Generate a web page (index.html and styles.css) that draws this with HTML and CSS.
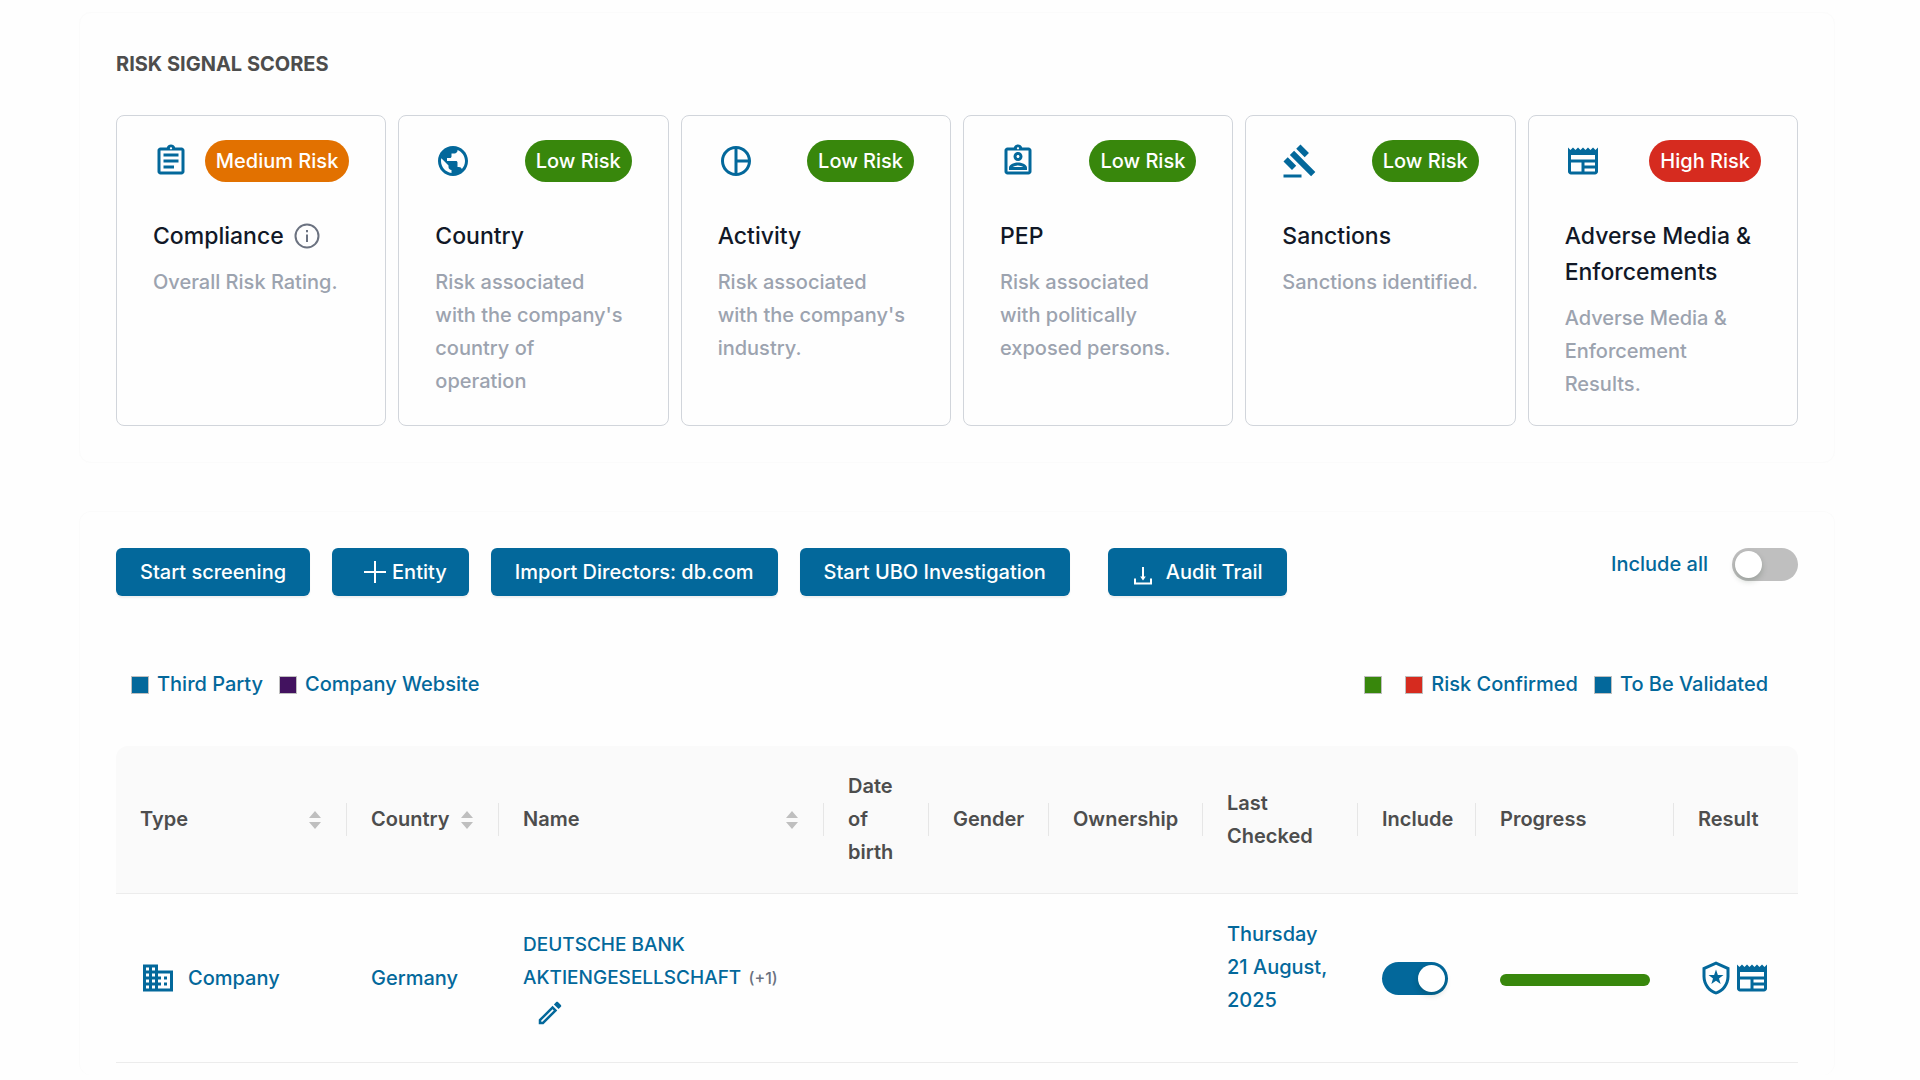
FILE: index.html
```html
<!DOCTYPE html>
<html lang="en">
<head>
    <meta charset="UTF-8">
    <title>Risk Signal Scores</title>
    <link rel="stylesheet" href="styles.css">
</head>
<body>
    <svg class="sprite">
        <symbol id="assignment" viewBox="0 0 24 24"><path d="M7 15h7v2H7zm0-4h10v2H7zm0-4h10v2H7zm12-4h-4.18C14.4 1.84 13.3 1 12 1c-1.3 0-2.4.84-2.82 2H5c-1.1 0-2 .9-2 2v14c0 1.1.9 2 2 2h14c1.1 0 2-.9 2-2V5c0-1.1-.9-2-2-2zm-7-.25c.41 0 .75.34.75.75s-.34.75-.75.75-.75-.34-.75-.75.34-.75.75-.75zM19 19H5V5h14v14z"/></symbol>
        <symbol id="public" viewBox="0 0 24 24"><path d="M12 2C6.48 2 2 6.48 2 12s4.48 10 10 10 10-4.48 10-10S17.52 2 12 2zm-1 17.93c-3.95-.49-7-3.85-7-7.93 0-.62.08-1.21.21-1.79L9 15v1c0 1.1.9 2 2 2v1.93zm6.9-2.54c-.26-.81-1-1.39-1.9-1.39h-1v-3c0-.55-.45-1-1-1H8v-2h2c.55 0 1-.45 1-1V7h2c1.1 0 2-.9 2-2v-.41c2.93 1.19 5 4.06 5 7.41 0 2.08-.8 3.97-2.1 5.39z"/></symbol>
        <symbol id="pie" viewBox="0 0 24 24"><path d="M12 2C6.48 2 2 6.48 2 12s4.48 10 10 10 10-4.48 10-10S17.52 2 12 2zm1 2.07c3.61.45 6.48 3.33 6.93 6.93H13V4.07zM4 12c0-4.06 3.07-7.44 7-7.93v15.87c-3.93-.5-7-3.88-7-7.94zm9 7.93V13h6.93c-.45 3.61-3.32 6.48-6.93 6.93z"/></symbol>
        <symbol id="assignment-ind" viewBox="0 0 24 24"><path d="M19 3h-4.18C14.4 1.84 13.3 1 12 1c-1.3 0-2.4.84-2.82 2H5c-1.1 0-2 .9-2 2v14c0 1.1.9 2 2 2h14c1.1 0 2-.9 2-2V5c0-1.1-.9-2-2-2zm-7-.25c.41 0 .75.34.75.75s-.34.75-.75.75-.75-.34-.75-.75.34-.75.75-.75zM19 19H5V5h14v14zM12 12c1.65 0 3-1.35 3-3s-1.35-3-3-3-3 1.35-3 3 1.35 3 3 3zm0-4c.55 0 1 .45 1 1s-.45 1-1 1-1-.45-1-1 .45-1 1-1zm6 8.58c0-2.5-3.97-3.58-6-3.58s-6 1.08-6 3.58V18h12v-1.42zM8.48 16c.74-.51 2.23-1 3.52-1 1.3 0 2.78.49 3.52 1H8.48z"/></symbol>
        <symbol id="gavel" viewBox="0 0 24 24"><path d="M1 21h12v2H1zM5.245 8.07l2.83-2.827 14.14 14.142-2.828 2.828zM12.317 1l5.657 5.656-2.83 2.83-5.654-5.66zM3.825 9.485l5.657 5.657-2.828 2.828-5.657-5.657z"/></symbol>
        <symbol id="newspaper" viewBox="0 0 24 24"><path d="M22 3l-1.67 1.67L18.67 3 17 4.67 15.33 3l-1.66 1.67L12 3l-1.67 1.67L8.67 3 7 4.67 5.33 3 3.67 4.67 2 3v16c0 1.1.9 2 2 2h16c1.1 0 2-.9 2-2V3zM11 19H4v-6h7v6zm9 0h-7v-2h7v2zm0-4h-7v-2h7v2zm0-4H4V8h16v3z"/></symbol>
        <symbol id="business" viewBox="0 0 24 24"><path d="M12 7V3H2v18h20V7H12zM6 19H4v-2h2v2zm0-4H4v-2h2v2zm0-4H4V9h2v2zm0-4H4V5h2v2zm4 12H8v-2h2v2zm0-4H8v-2h2v2zm0-4H8V9h2v2zm0-4H8V5h2v2zm10 12h-8v-2h2v-2h-2v-2h2v-2h-2V9h8v10zm-2-8h-2v2h2v-2zm0 4h-2v2h2v-2z"/></symbol>
        <symbol id="edit" viewBox="0 0 24 24"><path d="M14.06 9.02l.92.92L5.92 19H5v-.92l9.06-9.06M17.66 3c-.25 0-.51.1-.7.29l-1.83 1.83 3.75 3.75 1.83-1.83c.39-.39.39-1.02 0-1.41l-2.34-2.34c-.2-.2-.45-.29-.71-.29zm-3.6 3.19L3 17.25V21h3.75L17.81 9.94l-3.75-3.75z"/></symbol>
        <symbol id="police" viewBox="0 0 24 24"><path d="M12 1L3 5v6c0 5.55 3.84 10.74 9 12 5.16-1.26 9-6.45 9-12V5l-9-4zm7 10c0 4.52-2.98 8.69-7 9.93-4.02-1.24-7-5.41-7-9.93V6.3l7-3.11 7 3.11V11zM12 6.4l1.24 3.6H17l-3 2.3 1.1 3.7-3.1-2.2L8.900 16l1.1-3.7L7 10h3.76z"/></symbol>
    </svg>

    <section class="panel">
        <h2 class="section-title">RISK SIGNAL SCORES</h2>
        <div class="cards">
            <div class="card">
                <div class="card-head"><svg class="icon"><use href="#assignment"/></svg><span class="badge medium">Medium Risk</span></div>
                <h3 class="card-title">Compliance
                    <svg class="info" viewBox="0 0 30 30"><circle cx="15" cy="15" r="11.5"/><path d="M15 13.5V21M15 9v2.2"/></svg>
                </h3>
                <p class="card-text">Overall Risk Rating.</p>
            </div>
            <div class="card">
                <div class="card-head"><svg class="icon"><use href="#public"/></svg><span class="badge low">Low Risk</span></div>
                <h3 class="card-title">Country</h3>
                <p class="card-text">Risk associated<br>with the company's<br>country of<br>operation</p>
            </div>
            <div class="card">
                <div class="card-head"><svg class="icon"><use href="#pie"/></svg><span class="badge low">Low Risk</span></div>
                <h3 class="card-title">Activity</h3>
                <p class="card-text">Risk associated<br>with the company's<br>industry.</p>
            </div>
            <div class="card">
                <div class="card-head"><svg class="icon"><use href="#assignment-ind"/></svg><span class="badge low">Low Risk</span></div>
                <h3 class="card-title">PEP</h3>
                <p class="card-text">Risk associated<br>with politically<br>exposed persons.</p>
            </div>
            <div class="card">
                <div class="card-head"><svg class="icon"><use href="#gavel"/></svg><span class="badge low">Low Risk</span></div>
                <h3 class="card-title">Sanctions</h3>
                <p class="card-text">Sanctions identified.</p>
            </div>
            <div class="card">
                <div class="card-head"><svg class="icon"><use href="#newspaper"/></svg><span class="badge high">High Risk</span></div>
                <h3 class="card-title">Adverse Media &amp; Enforcements</h3>
                <p class="card-text">Adverse Media &amp; Enforcement Results.</p>
            </div>
        </div>
    </section>

    <section class="panel entities-panel">
        <div class="toolbar">
            <div class="buttons">
                <button class="button">Start screening</button>
                <button class="button with-icon"><svg class="plus" viewBox="0 0 22 22"><path d="M11 0v22M0 11h22"/></svg>Entity</button>
                <button class="button">Import Directors: db.com</button>
                <button class="button">Start UBO Investigation</button>
                <button class="button audit"><svg class="download" viewBox="0 0 18 18"><path d="M1 11.5v5h16v-5M9 0v12"/><path class="tip" d="M6.2 9.5h5.6L9 13.5z"/></svg>Audit Trail</button>
            </div>
            <label class="include-all">Include all <input type="checkbox" class="switch"></label>
        </div>

        <div class="legend">
            <div class="legend-group">
                <span class="legend-item"><i class="swatch blue"></i>Third Party</span>
                <span class="legend-item"><i class="swatch purple"></i>Company Website</span>
            </div>
            <div class="legend-group">
                <span class="legend-item unlabelled"><i class="swatch green"></i></span>
                <span class="legend-item"><i class="swatch red"></i>Risk Confirmed</span>
                <span class="legend-item"><i class="swatch blue"></i>To Be Validated</span>
            </div>
        </div>

        <table class="entities">
            <colgroup>
                <col class="col-type"><col class="col-country"><col class="col-name"><col class="col-birth"><col class="col-gender">
                <col class="col-ownership"><col class="col-checked"><col class="col-include"><col class="col-progress"><col class="col-result">
            </colgroup>
            <thead>
                <tr>
                    <th><div class="sortable">Type <svg class="sorter" viewBox="0 0 12 20"><path d="M0 8l6-7 6 7zM0 12h12l-6 7z"/></svg></div></th>
                    <th><div class="sortable">Country <svg class="sorter" viewBox="0 0 12 20"><path d="M0 8l6-7 6 7zM0 12h12l-6 7z"/></svg></div></th>
                    <th><div class="sortable">Name <svg class="sorter" viewBox="0 0 12 20"><path d="M0 8l6-7 6 7zM0 12h12l-6 7z"/></svg></div></th>
                    <th>Date of birth</th>
                    <th>Gender</th>
                    <th>Ownership</th>
                    <th>Last Checked</th>
                    <th>Include</th>
                    <th>Progress</th>
                    <th>Result</th>
                </tr>
            </thead>
            <tbody>
                <tr>
                    <td><div class="type"><svg class="icon"><use href="#business"/></svg>Company</div></td>
                    <td>Germany</td>
                    <td>
                        <span class="entity-name">DEUTSCHE BANK<br>AKTIENGESELLSCHAFT</span> <span class="aliases">(+1)</span>
                        <button class="edit" aria-label="Edit name"><svg><use href="#edit"/></svg></button>
                    </td>
                    <td></td>
                    <td></td>
                    <td></td>
                    <td><p class="date">Thursday 21 August, 2025</p></td>
                    <td><input type="checkbox" class="switch" aria-label="Include" checked></td>
                    <td><div class="progress"></div></td>
                    <td><div class="results"><svg class="icon"><use href="#police"/></svg><svg class="icon"><use href="#newspaper"/></svg></div></td>
                </tr>
            </tbody>
        </table>
    </section>
</body>
</html>
```
FILE: styles.css
```css
* {
    box-sizing: border-box;
}
body {
    margin: 0;
    padding: 12px 86px 0 80px;
    background-color: #fefefe;
    color: #03689b;
    font-family: Inter, sans-serif;
    font-size: 20px;
    font-weight: 500;
    line-height: 33px;
}
h2, h3, p {
    margin: 0;
}
.sprite {
    display: none;
}
.icon {
    width: 36px;
    height: 36px;
    flex: none;
    display: block;
    fill: #03689b;
}

.panel {
    padding: 36px;
    border: 1px solid #fbfbfb;
    border-radius: 12px;
    margin: 0 -1px 48px;
}
.entities-panel {
    margin-bottom: 0;
    padding-bottom: 12px;
    border-bottom: none;
}
.section-title {
    margin-bottom: 36px;
    color: #4d4d4d;
    font-size: 20px;
    font-weight: 700;
    line-height: 30px;
}

.cards {
    display: grid;
    grid-template-columns: repeat(6, 1fr);
    gap: 12px;
}
.card {
    padding: 24px 36px;
    border: 1px solid #d1d5db;
    border-radius: 8px;
}
.card-head {
    display: flex;
    justify-content: space-between;
    align-items: center;
    margin-bottom: 36px;
}
.badge {
    padding: 0 11px;
    border-radius: 21px;
    color: #fff;
    line-height: 42px;
    white-space: nowrap;
}
.medium {
    background-color: #e27100;
}
.low {
    background-color: #38870c;
}
.high {
    background-color: #d62b1f;
}
.card-title {
    display: flex;
    align-items: center;
    gap: 8px;
    margin-bottom: 12px;
    color: #111827;
    font-size: 23px;
    font-weight: 500;
    line-height: 36px;
}
.info {
    width: 30px;
    height: 30px;
    fill: none;
    stroke: #6b7280;
    stroke-width: 2;
}
.card-text {
    color: #9ca3af;
}

.toolbar {
    display: flex;
    justify-content: space-between;
    align-items: flex-start;
}
.buttons {
    display: flex;
    gap: 22px;
}
.button {
    display: flex;
    align-items: center;
    gap: 6px;
    height: 48px;
    padding: 0 24px;
    border: none;
    border-radius: 6px;
    background-color: #03689b;
    box-shadow: 0 2px 2px rgba(0, 0, 0, 0.06);
    color: #fff;
    font: inherit;
    white-space: nowrap;
    cursor: pointer;
}
.button svg {
    fill: none;
    stroke: #fff;
    stroke-width: 2;
}
.with-icon {
    padding: 0 22px 0 32px;
}
.plus {
    width: 22px;
    height: 22px;
}
.audit {
    gap: 14px;
    margin-left: 16px;
    padding-left: 26px;
}
.download {
    width: 18px;
    height: 18px;
    margin-top: 8px;
}
.button .tip {
    fill: #fff;
    stroke: none;
}
.include-all {
    display: flex;
    align-items: center;
    gap: 24px;
}

.switch {
    appearance: none;
    display: block;
    width: 66px;
    height: 33px;
    margin: 0;
    padding: 3px;
    border-radius: 17px;
    background-color: #bfbfbf;
    cursor: pointer;
}
.switch::before {
    content: "";
    display: block;
    width: 27px;
    height: 27px;
    border-radius: 50%;
    background-color: #fff;
    box-shadow: 0 3px 6px rgba(0, 35, 11, 0.2);
}
.switch:checked {
    background-color: #03689b;
}
.switch:checked::before {
    margin-left: auto;
}

.legend {
    display: flex;
    justify-content: space-between;
    margin: 72px 30px 45px 15px;
}
.legend-group {
    display: flex;
    gap: 16px;
}
.legend-item {
    display: flex;
    align-items: center;
    gap: 8px;
}
.unlabelled {
    margin-right: 7px;
}
.swatch {
    width: 18px;
    height: 18px;
    border: 1px solid #bfbfbf;
}
.blue {
    background-color: #03689b;
}
.purple {
    background-color: #42125f;
}
.green {
    background-color: #38870c;
}
.red {
    background-color: #d62b1f;
}

.entities {
    width: 100%;
    table-layout: fixed;
    border-collapse: separate;
    border-spacing: 0;
}
.col-type { width: 231px; }
.col-country { width: 152px; }
.col-name { width: 325px; }
.col-birth { width: 105px; }
.col-gender { width: 120px; }
.col-ownership { width: 154px; }
.col-checked { width: 155px; }
.col-include { width: 118px; }
.col-progress { width: 198px; }
.col-result { width: 124px; }
.entities th,
.entities td {
    padding: 24px;
    border-bottom: 1px solid #ececec;
    text-align: left;
}
.entities th {
    background: linear-gradient(#e6e6e6, #e6e6e6) right center / 1px 33px no-repeat #fafafa;
    color: #4d4d4d;
    font-weight: 600;
}
.entities th:first-child {
    border-top-left-radius: 12px;
}
.entities th:last-child {
    border-top-right-radius: 12px;
    background-image: none;
}
.sortable {
    display: flex;
    justify-content: space-between;
    align-items: center;
}
.sorter {
    width: 12px;
    height: 20px;
    margin-right: 2px;
    fill: #bfbfbf;
}
.type {
    display: flex;
    align-items: center;
    gap: 12px;
}
.entity-name {
    font-size: 19px;
}
.aliases {
    margin-left: 2px;
    color: #6b7280;
    font-size: 16px;
}
.edit {
    display: block;
    width: 30px;
    height: 33px;
    margin-left: 12px;
    padding: 3px 0 0;
    border: none;
    background: none;
    cursor: pointer;
}
.edit svg {
    display: block;
    width: 30px;
    height: 30px;
    fill: #03689b;
}
.date {
    margin-bottom: 21px;
}
.progress {
    height: 12px;
    margin-top: 3px;
    border-radius: 6px;
    background-color: #38870c;
}
.results {
    display: flex;
}
```
